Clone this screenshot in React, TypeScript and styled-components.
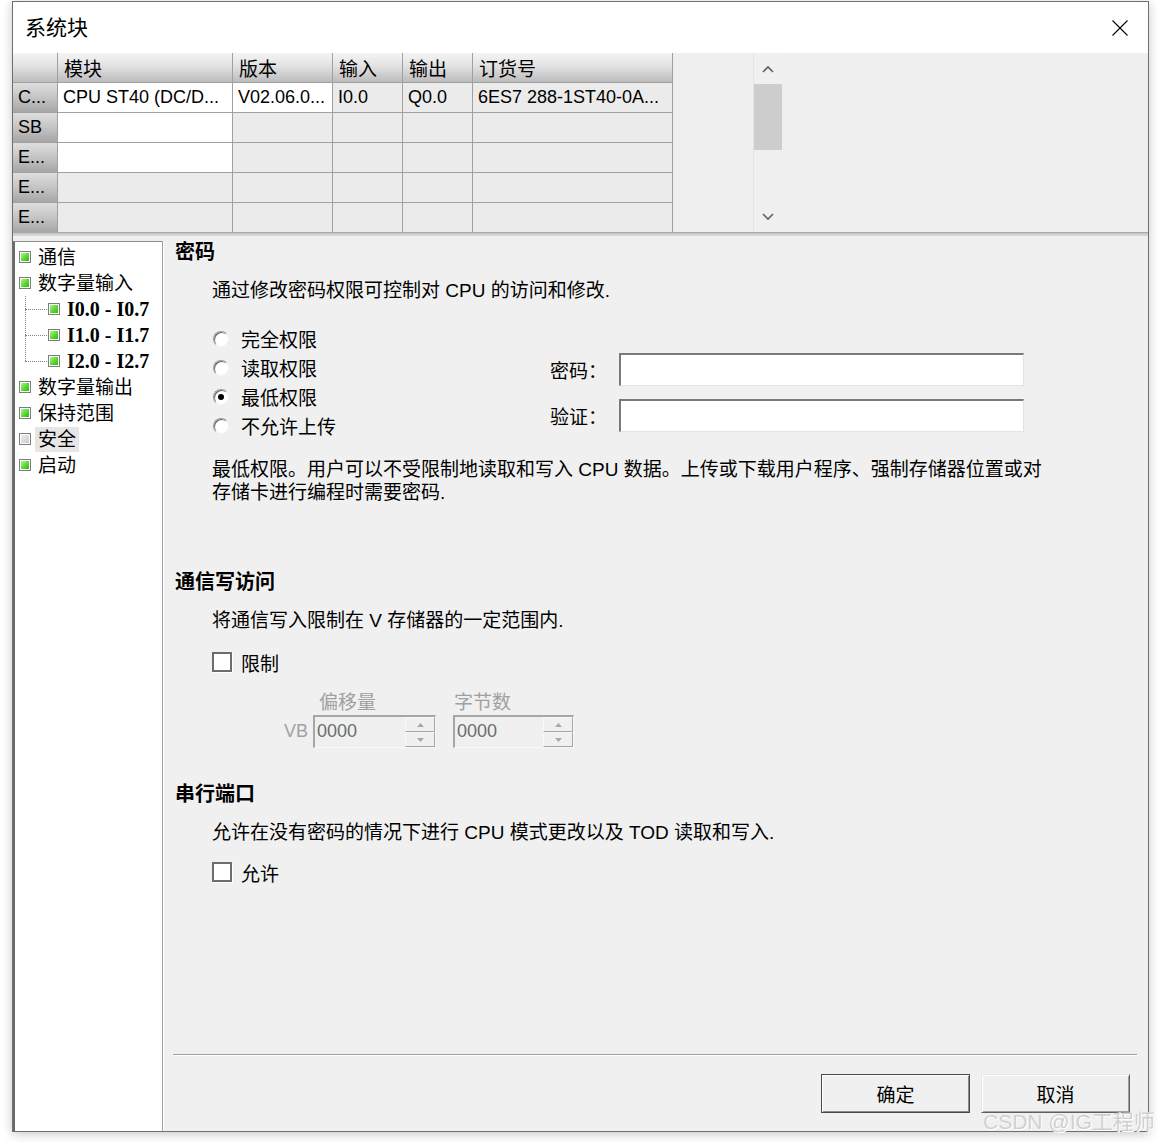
import React from 'react';
import styled, { createGlobalStyle } from 'styled-components';

const GlobalStyle = createGlobalStyle`
  html, body {
    margin: 0;
    padding: 0;
    background: #ffffff;
  }
  body {
    font-family: "Liberation Sans", "Noto Sans CJK SC", sans-serif;
    color: #000;
  }
  * {
    box-sizing: border-box;
  }
`;

const Page = styled.div`
  position: relative;
  width: 1158px;
  height: 1142px;
  padding: 1px 0 0 12px;
  overflow: hidden;
`;

const Window = styled.div`
  width: 1137px;
  height: 1131px;
  border: 1px solid #6f6f6f;
  box-shadow: 0 2px 10px rgba(0, 0, 0, 0.22);
  display: flex;
  flex-direction: column;
  background: #f0f0f0;
`;

const TitleBar = styled.div`
  height: 51px;
  flex: 0 0 51px;
  background: #ffffff;
  display: flex;
  align-items: center;
  justify-content: space-between;
  padding: 0 20px 0 12px;
`;

const Title = styled.span`
  font-size: 21px;
  line-height: 1;
`;

const CloseBtn = styled.span`
  display: flex;
  width: 16px;
  height: 16px;
`;

/* ---- module grid ---- */

const GridArea = styled.div`
  height: 179px;
  flex: 0 0 179px;
  display: flex;
  background: #efefef;
  overflow: hidden;
`;

const Table = styled.div`
  display: grid;
  grid-template-columns: 45px 175px 100px 70px 70px 200px;
  grid-auto-rows: 30px;
  width: 660px;
  flex: 0 0 660px;
`;

type CellKind = 'head' | 'rowhead' | 'white' | 'gray';

const Cell = styled.div<{ $kind: CellKind }>`
  border-right: 1px solid #a0a0a0;
  border-bottom: 1px solid #a0a0a0;
  padding-left: ${(p) => (p.$kind === 'head' ? '6px' : '5px')};
  display: flex;
  align-items: center;
  white-space: nowrap;
  overflow: hidden;
  font-size: ${(p) => (p.$kind === 'head' ? '19px' : '18px')};
  background: ${(p) =>
    p.$kind === 'head'
      ? 'linear-gradient(#f4f4f4, #e2e2e2 45%, #bcbcbc)'
      : p.$kind === 'rowhead'
      ? 'linear-gradient(#dedede, #c4c4c4 50%, #a6a6a6)'
      : p.$kind === 'white'
      ? '#ffffff'
      : '#ebebeb'};
`;

const GridGap = styled.div`
  width: 80px;
  flex: 0 0 80px;
`;

const ScrollBar = styled.div`
  width: 29px;
  flex: 0 0 29px;
  display: flex;
  flex-direction: column;
  background: #f0f0f0;
  border-left: 1px solid #e4e4e4;
`;

const ScrollArrow = styled.div`
  height: 31px;
  flex: 0 0 31px;
  display: flex;
  align-items: center;
  justify-content: center;
`;

const ScrollThumb = styled.div`
  height: 66px;
  flex: 0 0 66px;
  background: #cdcdcd;
`;

const ScrollTrack = styled.div`
  flex: 1;
`;

const Splitter = styled.div`
  height: 4px;
  flex: 0 0 4px;
  border-top: 1px solid #a8a8a8;
  background: linear-gradient(#c4c4c4, #dcdcdc);
`;

/* ---- lower area ---- */

const Body = styled.div`
  flex: 1;
  display: flex;
  min-height: 0;
`;

const Tree = styled.div`
  width: 150px;
  flex: 0 0 150px;
  margin-top: 5px;
  background: #ffffff;
  border-top: 1px solid #8c8c8c;
  border-left: 2px solid #6a6a6a;
  border-right: 1px solid #a0a0a0;
  box-shadow: 1px 0 0 #ffffff;
  padding-top: 2px;
`;

const TreeRow = styled.div`
  height: 26px;
  display: flex;
  align-items: center;
  padding-left: 4px;
  gap: 7px;
`;

const TreeIcon = styled.span<{ $off?: boolean }>`
  width: 12px;
  height: 12px;
  flex: 0 0 12px;
  border: 1px solid #7d7d7d;
  box-shadow: inset 0 0 0 1px #ffffff;
  background: ${(p) =>
    p.$off
      ? 'linear-gradient(135deg, #f2f2f2, #c6c6c6)'
      : 'linear-gradient(135deg, #c4f7a8, #56d82c 55%, #2fae12)'};
`;

const TreeLabel = styled.span<{ $selected?: boolean; $bold?: boolean }>`
  font-size: ${(p) => (p.$bold ? '20px' : '19px')};
  font-family: ${(p) =>
    p.$bold ? '"Liberation Serif", "Noto Sans CJK SC", serif' : 'inherit'};
  font-weight: ${(p) => (p.$bold ? 700 : 400)};
  line-height: 25px;
  background: ${(p) => (p.$selected ? '#e6e6e6' : 'transparent')};
  padding: 0 3px;
  margin-left: -3px;
  white-space: nowrap;
`;

const ChildList = styled.div`
  position: relative;
  padding-left: 10px;

  &::before {
    content: '';
    position: absolute;
    left: 10px;
    top: 0;
    bottom: 13px;
    border-left: 1px dotted #808080;
  }
`;

const ChildRow = styled.div`
  height: 26px;
  display: flex;
  align-items: center;
  gap: 7px;
`;

const Connector = styled.span`
  width: 22px;
  flex: 0 0 22px;
  border-top: 1px dotted #808080;
  margin-right: -6px;
`;

const Content = styled.div`
  flex: 1;
  display: flex;
  flex-direction: column;
  padding: 0 11px 18px 10px;
`;

const Heading = styled.div<{ $top: number }>`
  margin-top: ${(p) => p.$top}px;
  padding-left: 2px;
  font-size: 20px;
  font-weight: 700;
  line-height: 26px;
`;

const Indent = styled.div<{ $top: number }>`
  margin-top: ${(p) => p.$top}px;
  padding-left: 39px;
`;

const Text = styled.div<{ $lh?: number }>`
  font-size: 19px;
  line-height: ${(p) => p.$lh ?? 24}px;
  white-space: nowrap;
`;

const RadioArea = styled.div`
  display: flex;
`;

const RadioGroup = styled.div`
  width: 338px;
  flex: 0 0 338px;
`;

const RadioRow = styled.label`
  height: 29px;
  display: flex;
  align-items: center;
  gap: 12px;
  padding-left: 1px;
  font-size: 19px;
`;

const RadioCircle = styled.span<{ $checked?: boolean }>`
  width: 16px;
  height: 16px;
  flex: 0 0 16px;
  border-radius: 50%;
  border: 1px solid;
  border-color: #9a9a9a #f4f4f4 #f4f4f4 #9a9a9a;
  box-shadow: inset 1px 1px 0 #6a6a6a;
  background: #ffffff;
  display: flex;
  align-items: center;
  justify-content: center;

  &::after {
    content: '';
    width: 6px;
    height: 6px;
    border-radius: 50%;
    background: ${(p) => (p.$checked ? '#000' : 'transparent')};
  }
`;

const Fields = styled.div`
  margin-top: 29px;
  display: flex;
  flex-direction: column;
  gap: 13px;
`;

const FieldRow = styled.div`
  display: flex;
  align-items: center;
`;

const FieldLabel = styled.span`
  width: 69px;
  font-size: 19px;
`;

const FieldInput = styled.div`
  width: 405px;
  height: 33px;
  background: #ffffff;
  border-top: 2px solid #7a7a7a;
  border-left: 2px solid #7a7a7a;
  border-right: 1px solid #e3e3e3;
  border-bottom: 1px solid #e3e3e3;
`;

const CheckRow = styled.label`
  height: 20px;
  display: flex;
  align-items: center;
  gap: 9px;
  font-size: 19px;
`;

const CheckBox = styled.span`
  width: 20px;
  height: 20px;
  flex: 0 0 20px;
  background: #ffffff;
  border: 2px solid #6d6d6d;
  box-shadow: 1px 1px 0 #ffffff;
`;

const SpinGrid = styled.div`
  margin-top: 18px;
  margin-left: 72px;
  display: grid;
  grid-template-columns: 29px 140px 121px;
  grid-template-rows: 25px 33px;
  align-items: center;
  color: #a0a0a0;
`;

const SpinLabel = styled.span<{ $pad: number; $col: number }>`
  grid-column: ${(p) => p.$col};
  grid-row: 1;
  padding-left: ${(p) => p.$pad}px;
  font-size: 19px;
  line-height: 24px;
`;

const VBLabel = styled.span`
  grid-column: 1;
  grid-row: 2;
  font-size: 18px;
`;

const SpinBox = styled.div<{ $w: number; $col: number }>`
  grid-column: ${(p) => p.$col};
  grid-row: 2;
  width: ${(p) => p.$w}px;
  height: 33px;
  display: flex;
  border-top: 2px solid #a6a6a6;
  border-left: 2px solid #a6a6a6;
  border-right: 1px solid #f8f8f8;
  border-bottom: 1px solid #f8f8f8;
  background: #f0f0f0;
`;

const SpinValue = styled.span`
  flex: 1;
  padding-left: 2px;
  font-size: 18px;
  line-height: 28px;
  color: #6d6d6d;
`;

const SpinButtons = styled.div`
  width: 30px;
  display: flex;
  flex-direction: column;
`;

const SpinBtn = styled.div`
  flex: 1;
  display: flex;
  align-items: center;
  justify-content: center;
  border: 1px solid;
  border-color: #f8f8f8 #a6a6a6 #a6a6a6 #f8f8f8;
`;

const Separator = styled.div`
  margin-top: auto;
  height: 2px;
  border-top: 1px solid #a0a0a0;
  border-bottom: 1px solid #ffffff;
`;

const ButtonRow = styled.div`
  margin-top: 18px;
  display: flex;
  justify-content: flex-end;
  gap: 11px;
  padding-right: 7px;
`;

const DialogButton = styled.button<{ $default?: boolean }>`
  width: 149px;
  height: 39px;
  font-family: inherit;
  font-size: 19px;
  color: #000;
  background: #f0f0f0;
  border: 1px solid;
  border-color: ${(p) =>
    p.$default ? '#4a4a4a' : '#e8e8e8 #5f5f5f #5f5f5f #e8e8e8'};
  box-shadow: ${(p) =>
    p.$default
      ? 'inset 1px 1px 0 #ffffff, inset -1px -1px 0 #8a8a8a'
      : 'inset 1px 1px 0 #ffffff, inset -1px -1px 0 #a0a0a0'};
  padding: 0;
`;

const Watermark = styled.div`
  position: absolute;
  left: 983px;
  top: 1109px;
  font-size: 21px;
  line-height: 25px;
  color: #cfcfcf;
  text-shadow: 0 0 1px #ffffff, 1px 1px 0 #ffffff;
  white-space: nowrap;
  pointer-events: none;
`;

const Chevron: React.FC<{ up?: boolean }> = ({ up }) => (
  <svg width="12" height="8" viewBox="0 0 12 8">
    <path
      d={up ? 'M1 7 L6 2 L11 7' : 'M1 1 L6 6 L11 1'}
      fill="none"
      stroke="#606060"
      strokeWidth="1.6"
    />
  </svg>
);

const Tri: React.FC<{ up?: boolean }> = ({ up }) => (
  <svg width="7" height="4" viewBox="0 0 7 4">
    <path d={up ? 'M0 4 L3.5 0 L7 4Z' : 'M0 0 L3.5 4 L7 0Z'} fill="#a8a8a8" />
  </svg>
);

const header = ['', '模块', '版本', '输入', '输出', '订货号'];
const rows: string[][] = [
  ['C...', 'CPU ST40 (DC/D...', 'V02.06.0...', 'I0.0', 'Q0.0', '6ES7 288-1ST40-0A...'],
  ['SB', '', '', '', '', ''],
  ['E...', '', '', '', '', ''],
  ['E...', '', '', '', '', ''],
  ['E...', '', '', '', '', ''],
];
const whiteCells = new Set(['0-1', '0-2', '1-1', '2-1']);

const treeTop = [
  { label: '通信' },
  { label: '数字量输入', children: ['I0.0 - I0.7', 'I1.0 - I1.7', 'I2.0 - I2.7'] },
  { label: '数字量输出' },
  { label: '保持范围' },
  { label: '安全', selected: true },
  { label: '启动' },
];

const radios = ['完全权限', '读取权限', '最低权限', '不允许上传'];

const App: React.FC = () => {
  return (
    <Page>
      <GlobalStyle />
      <Window>
        <TitleBar>
          <Title>系统块</Title>
          <CloseBtn>
            <svg width="16" height="16" viewBox="0 0 16 16">
              <path d="M0.5 0.5 L15.5 15.5 M15.5 0.5 L0.5 15.5" stroke="#000" strokeWidth="1.1" />
            </svg>
          </CloseBtn>
        </TitleBar>

        <GridArea>
          <Table>
            {header.map((h, i) => (
              <Cell key={`h${i}`} $kind="head">
                {h}
              </Cell>
            ))}
            {rows.map((r, ri) =>
              r.map((c, ci) => (
                <Cell
                  key={`${ri}-${ci}`}
                  $kind={ci === 0 ? 'rowhead' : whiteCells.has(`${ri}-${ci}`) ? 'white' : 'gray'}
                >
                  {c}
                </Cell>
              ))
            )}
          </Table>
          <GridGap />
          <ScrollBar>
            <ScrollArrow>
              <Chevron up />
            </ScrollArrow>
            <ScrollThumb />
            <ScrollTrack />
            <ScrollArrow>
              <Chevron />
            </ScrollArrow>
          </ScrollBar>
        </GridArea>
        <Splitter />

        <Body>
          <Tree>
            {treeTop.map((t) => (
              <React.Fragment key={t.label}>
                <TreeRow>
                  <TreeIcon $off={t.selected} />
                  <TreeLabel $selected={t.selected}>{t.label}</TreeLabel>
                </TreeRow>
                {t.children && (
                  <ChildList>
                    {t.children.map((c) => (
                      <ChildRow key={c}>
                        <Connector />
                        <TreeIcon />
                        <TreeLabel $bold>{c}</TreeLabel>
                      </ChildRow>
                    ))}
                  </ChildList>
                )}
              </React.Fragment>
            ))}
          </Tree>

          <Content>
            <Heading $top={3}>密码</Heading>
            <Indent $top={14}>
              <Text>通过修改密码权限可控制对 CPU 的访问和修改.</Text>
            </Indent>
            <Indent $top={21}>
              <RadioArea>
                <RadioGroup>
                  {radios.map((r) => (
                    <RadioRow key={r}>
                      <RadioCircle $checked={r === '最低权限'} />
                      {r}
                    </RadioRow>
                  ))}
                </RadioGroup>
                <Fields>
                  <FieldRow>
                    <FieldLabel>密码：</FieldLabel>
                    <FieldInput />
                  </FieldRow>
                  <FieldRow>
                    <FieldLabel>验证：</FieldLabel>
                    <FieldInput />
                  </FieldRow>
                </Fields>
              </RadioArea>
            </Indent>
            <Indent $top={18}>
              <Text $lh={23}>
                最低权限。用户可以不受限制地读取和写入 CPU 数据。上传或下载用户程序、强制存储器位置或对
                <br />
                存储卡进行编程时需要密码.
              </Text>
            </Indent>

            <Heading $top={65}>通信写访问</Heading>
            <Indent $top={14}>
              <Text>将通信写入限制在 V 存储器的一定范围内.</Text>
            </Indent>
            <Indent $top={19}>
              <CheckRow>
                <CheckBox />
                限制
              </CheckRow>
              <SpinGrid>
                <SpinLabel $col={2} $pad={6}>偏移量</SpinLabel>
                <SpinLabel $col={3} $pad={1}>字节数</SpinLabel>
                <VBLabel>VB</VBLabel>
                <SpinBox $col={2} $w={123}>
                  <SpinValue>0000</SpinValue>
                  <SpinButtons>
                    <SpinBtn>
                      <Tri up />
                    </SpinBtn>
                    <SpinBtn>
                      <Tri />
                    </SpinBtn>
                  </SpinButtons>
                </SpinBox>
                <SpinBox $col={3} $w={121}>
                  <SpinValue>0000</SpinValue>
                  <SpinButtons>
                    <SpinBtn>
                      <Tri up />
                    </SpinBtn>
                    <SpinBtn>
                      <Tri />
                    </SpinBtn>
                  </SpinButtons>
                </SpinBox>
              </SpinGrid>
            </Indent>

            <Heading $top={33}>串行端口</Heading>
            <Indent $top={14}>
              <Text>允许在没有密码的情况下进行 CPU 模式更改以及 TOD 读取和写入.</Text>
            </Indent>
            <Indent $top={17}>
              <CheckRow>
                <CheckBox />
                允许
              </CheckRow>
            </Indent>

            <Separator />
            <ButtonRow>
              <DialogButton $default>确定</DialogButton>
              <DialogButton>取消</DialogButton>
            </ButtonRow>
          </Content>
        </Body>
      </Window>
      <Watermark>CSDN @IG工程师</Watermark>
    </Page>
  );
};

export default App;
